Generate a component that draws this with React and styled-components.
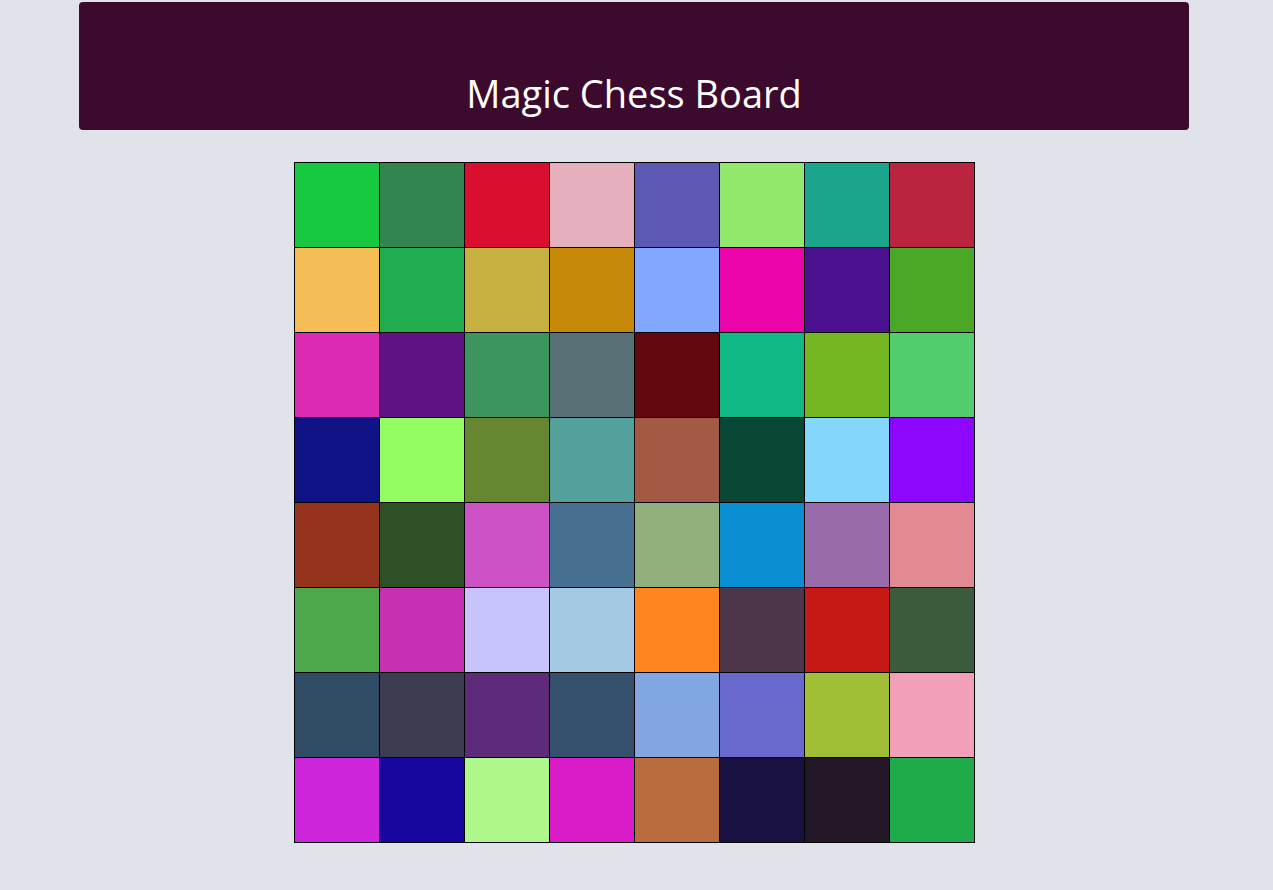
import React from "react";
import styled, { createGlobalStyle } from "styled-components";

const colors = [
  ["#16c93f", "#33854f", "#da0e2e", "#e6afbd", "#5c59b5", "#91e86a", "#1aa58c", "#bb243f"],
  ["#f5bd56", "#21ad4d", "#c6b03f", "#c58808", "#83a6ff", "#ec05ab", "#4b118e", "#4aa826"],
  ["#dc2ab3", "#5e1283", "#3b955c", "#577075", "#63080e", "#11b986", "#76b522", "#53cd6c"],
  ["#0f1385", "#93fd62", "#678632", "#53a19c", "#a35a43", "#0a4636", "#84d6fc", "#8d07ff"],
  ["#95331c", "#2d5026", "#cc52c5", "#467092", "#91b07e", "#0b8fd4", "#9a6baa", "#e38991"],
  ["#4da84b", "#c631b4", "#c7c4fb", "#a3cae2", "#ff861f", "#4b3747", "#c61815", "#3b5c3c"],
  ["#2f4c64", "#3d3c51", "#5e2b7a", "#34506c", "#82a6e2", "#6a69cd", "#a1be37", "#f29fba"],
  ["#cc25da", "#17079e", "#adf78b", "#d91cc8", "#b96c3d", "#181142", "#241828", "#20ab4a"],
];

const GlobalStyle = createGlobalStyle`
  body {
    margin: 0;
    background: #e0e3e9;
    font-family: "Open Sans", "Noto Sans", sans-serif;
  }
`;

const Page = styled.div`
  padding: 2px 5px 40px 0;
`;

const Header = styled.header`
  width: 1110px;
  height: 128px;
  margin: 0 auto;
  background: #3c0a2c;
  border-radius: 4px;
  display: flex;
  align-items: flex-end;
  justify-content: center;
  box-sizing: border-box;
  padding-bottom: 13px;
`;

const Title = styled.h1`
  margin: 0;
  color: #ffffff;
  font-size: 38px;
  font-weight: 400;
  line-height: 1.2;
`;

const Board = styled.div`
  width: 681px;
  margin: 32px auto 0;
  padding: 1px;
  box-sizing: border-box;
  background: #000;
  display: grid;
  grid-template-columns: repeat(8, 84px);
  grid-auto-rows: 84px;
  gap: 1px;
`;

const Square = styled.div`
  background: ${(p) => p.$color};
`;

export default function App() {
  return (
    <Page>
      <GlobalStyle />
      <Header>
        <Title>Magic Chess Board</Title>
      </Header>
      <Board>
        {colors.flat().map((c, i) => (
          <Square key={i} $color={c} />
        ))}
      </Board>
    </Page>
  );
}
